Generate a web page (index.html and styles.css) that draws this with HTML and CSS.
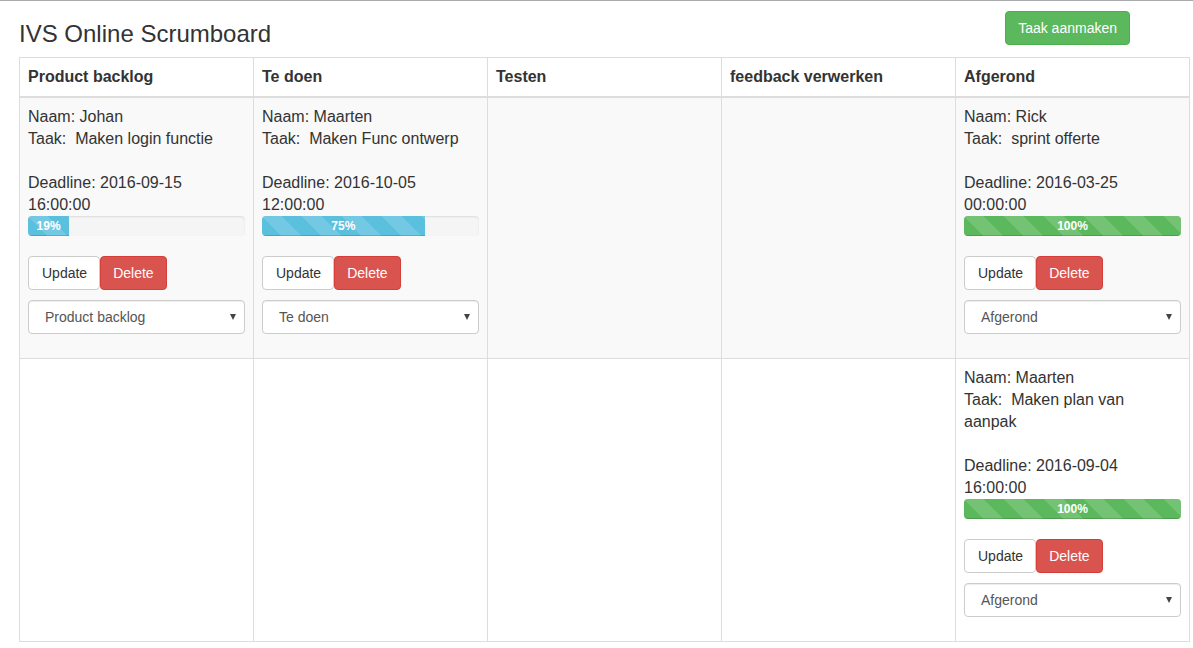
FILE: index.html
```html
<!DOCTYPE html>
<html lang="nl">
<head>
<meta charset="utf-8">
<title>IVS Online Scrumboard</title>
<link rel="stylesheet" href="styles.css">
</head>
<body>
<div class="page">
  <header class="top">
    <h3 class="title">IVS Online Scrumboard</h3>
    <button class="btn btn-success create">Taak aanmaken</button>
  </header>
  <table class="board">
    <thead>
      <tr>
        <th>Product backlog</th>
        <th>Te doen</th>
        <th>Testen</th>
        <th>feedback verwerken</th>
        <th>Afgerond</th>
      </tr>
    </thead>
    <tbody>
      <tr class="striped">
        <td>
          <div class="task">
            <p class="info">Naam: Johan<br>Taak:&nbsp; Maken login functie<br><br>Deadline: 2016-09-15 16:00:00</p>
            <div class="progress"><div class="bar bar-info" style="width:19%">19%</div></div>
            <div class="actions"><button class="btn btn-default">Update</button><button class="btn btn-danger">Delete</button></div>
            <div class="select"><span>Product backlog</span><i class="caret"></i></div>
          </div>
        </td>
        <td>
          <div class="task">
            <p class="info">Naam: Maarten<br>Taak:&nbsp; Maken Func ontwerp<br><br>Deadline: 2016-10-05 12:00:00</p>
            <div class="progress"><div class="bar bar-info" style="width:75%">75%</div></div>
            <div class="actions"><button class="btn btn-default">Update</button><button class="btn btn-danger">Delete</button></div>
            <div class="select"><span>Te doen</span><i class="caret"></i></div>
          </div>
        </td>
        <td></td>
        <td></td>
        <td>
          <div class="task">
            <p class="info">Naam: Rick<br>Taak:&nbsp; sprint offerte<br><br>Deadline: 2016-03-25 00:00:00</p>
            <div class="progress"><div class="bar bar-success" style="width:100%">100%</div></div>
            <div class="actions"><button class="btn btn-default">Update</button><button class="btn btn-danger">Delete</button></div>
            <div class="select"><span>Afgerond</span><i class="caret"></i></div>
          </div>
        </td>
      </tr>
      <tr>
        <td></td>
        <td></td>
        <td></td>
        <td></td>
        <td>
          <div class="task">
            <p class="info">Naam: Maarten<br>Taak:&nbsp; Maken plan van aanpak<br><br>Deadline: 2016-09-04 16:00:00</p>
            <div class="progress"><div class="bar bar-success" style="width:100%">100%</div></div>
            <div class="actions"><button class="btn btn-default">Update</button><button class="btn btn-danger">Delete</button></div>
            <div class="select"><span>Afgerond</span><i class="caret"></i></div>
          </div>
        </td>
      </tr>
    </tbody>
  </table>
</div>
</body>
</html>
```
FILE: styles.css
```css
* { box-sizing: border-box; }
html, body { margin: 0; padding: 0; background: #fff; }
body {
  font-family: "Liberation Sans", Arial, sans-serif;
  font-size: 16px;
  line-height: 22px;
  color: #333;
  border-top: 1px solid #a9a9a9;
}
.page { padding-left: 19px; width: 1193px; }
.top { display: flex; align-items: flex-start; width: 1171px; }
.title {
  margin: 20px 0 10px 0;
  font-size: 24px;
  font-weight: 500;
  line-height: 26.4px;
  color: #333;
}
.create { margin: 10px 60px 0 auto; padding: 6px 13px; }

.btn {
  font-family: "Liberation Sans", Arial, sans-serif;
  font-size: 14px;
  line-height: 20px;
  padding: 6px 12px;
  border: 1px solid transparent;
  border-radius: 4px;
  cursor: pointer;
  display: inline-block;
}
.btn-success { background: #5cb85c; border-color: #4cae4c; color: #fff; }
.btn-default { background: #fff; border-color: #ccc; color: #333; }
.btn-danger { background: #d9534f; border-color: #d43f3a; color: #fff; }
.actions .btn-default { padding: 6px 12px 6px 13px; }

.board {
  border-collapse: collapse;
  table-layout: fixed;
  width: 1171px;
  border: 1px solid #ddd;
}
.board th, .board td {
  border: 1px solid #ddd;
  padding: 8px;
  text-align: left;
  vertical-align: top;
}
.board th {
  font-weight: bold;
  vertical-align: bottom;
  border-bottom: 2px solid #ddd;
}
.board tr.striped td { background: #f9f9f9; }

.info { margin: 0; }
.progress {
  margin: 0 0 20px 0;
  height: 20px;
  background: #f5f5f5;
  border-radius: 4px;
  overflow: hidden;
  box-shadow: inset 0 1px 2px rgba(0,0,0,.1);
}
.bar {
  height: 100%;
  font-size: 12px;
  font-weight: bold;
  line-height: 20px;
  color: #fff;
  text-align: center;
  box-shadow: inset 0 -1px 0 rgba(0,0,0,.15);
  background-image: linear-gradient(45deg, rgba(255,255,255,.15) 25%, transparent 25%, transparent 50%, rgba(255,255,255,.15) 50%, rgba(255,255,255,.15) 75%, transparent 75%, transparent);
  background-size: 40px 40px;
}
.bar-info { background-color: #5bc0de; }
.bar-success { background-color: #5cb85c; }

.actions { display: flex; margin-bottom: 10px; }
.select {
  display: flex;
  align-items: center;
  justify-content: space-between;
  height: 34px;
  padding: 0 8px 0 16px;
  margin-bottom: 16px;
  background: #fff;
  border: 1px solid #ccc;
  border-radius: 4px;
  box-shadow: inset 0 1px 1px rgba(0,0,0,.075);
  font-size: 14px;
  color: #555;
}
.caret {
  width: 0;
  height: 0;
  border-left: 3.5px solid transparent;
  border-right: 3.5px solid transparent;
  border-top: 6px solid #444;
}
```
